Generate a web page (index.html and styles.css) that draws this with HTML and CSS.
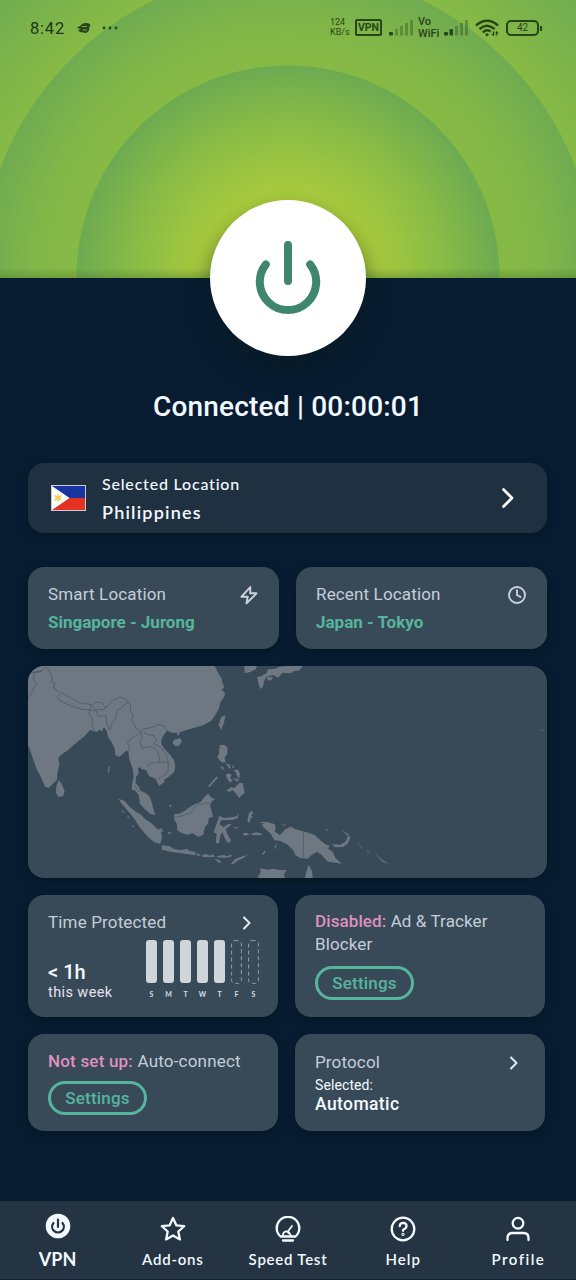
FILE: index.html
```html
<!DOCTYPE html>
<html lang="en">
<head>
<meta charset="utf-8">
<title>VPN</title>
<link rel="stylesheet" href="styles.css">
</head>
<body>
<div class="app">
  <header class="hero">
    <div class="status">
      <span class="clock">8:42</span>
      <svg class="bird" width="14" height="12" viewBox="0 0 14 12"><path d="M1 5 Q4 4 5 2 Q9 0 13 2 Q14 4 12 6 Q13 9 9 11 L3 10 L1 8 L4 7 L0 6Z" fill="currentColor"/><path d="M5 4.500h5M6 8h4" stroke="#78ad4a" stroke-width="1"/></svg>
      <svg class="dots" width="16" height="4" viewBox="0 0 16 4" fill="currentColor"><circle cx="2" cy="2" r="1.400"/><circle cx="8" cy="2" r="1.400"/><circle cx="14" cy="2" r="1.400"/></svg>
      <span class="rate">124<br>KB/s</span>
      <span class="vpn-tag">VPN</span>
      <svg class="signal" width="25" height="16" viewBox="0 0 25 16" fill="currentColor"><rect y="12" width="4" height="3.500" rx="1"/><g opacity=".35"><rect x="6" y="9" width="3" height="6.500"/><rect x="11" y="6" width="3" height="9.500"/><rect x="16" y="3" width="3" height="12.500"/><rect x="21" y="0" width="3" height="15.500"/></g></svg>
      <span class="vowifi">Vo<br>WiFi</span>
      <svg class="signal two" width="25" height="16" viewBox="0 0 25 16" fill="currentColor"><rect y="12" width="4" height="3.500" rx="1"/><rect x="5.500" y="9" width="3.500" height="6.500" rx="1"/><g opacity=".35"><rect x="11" y="6" width="3" height="9.500"/><rect x="16" y="3" width="3" height="12.500"/><rect x="21" y="0" width="3" height="15.500"/></g></svg>
      <svg class="wifi" width="24" height="18" viewBox="0 0 24 18" fill="none" stroke="currentColor" stroke-width="2.400"><path d="M1 6.500Q12-3 23 6.500M4.500 10Q12 3.500 19.500 10M7.800 13.300Q12 9.500 15.500 12.500"/><path d="M10 15.500l2 2 2-2-2-1.500z" fill="currentColor" stroke="none"/><path d="M18.500 12.500v4M21.500 12.500v4" stroke-width="1.500"/><path d="M16.500 14.800l2 2M21.500 12.500l2 2" stroke-width="1"/></svg>
      <span class="battery"><span>42</span></span>
    </div>
  </header>
  <button class="power" aria-label="Disconnect">
    <svg width="70" height="78" viewBox="0 0 70 78" fill="none" stroke="#3e876c" stroke-width="8" stroke-linecap="round"><path d="M35 6v36M12.800 25.500a28.200 28.200 0 1 0 44.400 0"/></svg>
  </button>
  <h1 class="state"><span>Connected | 00:00:01</span></h1>

  <main class="content">
    <section class="card location">
      <svg class="flag" width="35" height="26" viewBox="0 0 35 26"><rect width="35" height="26" fill="#c9cad5"/><path d="M1 1h33v12H1z" fill="#1834a1"/><path d="M1 13h33v12H1z" fill="#e43222"/><path d="M1 1l17.500 12L1 25z" fill="#fff"/><path d="M7 8l1 3 3-1-1.500 3 1.500 3-3-1-1 3-1-3-3 1 1.500-3L3 10l3 1z" fill="#f2cf64"/></svg>
      <div class="location-text">
        <span class="t-sel">Selected Location</span>
        <strong class="t-country">Philippines</strong>
      </div>
      <svg class="chev-lg" width="14" height="22" viewBox="0 0 14 22" fill="none" stroke="#fff" stroke-width="2.700" stroke-linecap="round" stroke-linejoin="round"><path d="M2.500 2.500L11 11l-8.500 8.500"/></svg>
    </section>

    <div class="row quick">
      <section class="card">
        <div class="label">Smart Location</div>
        <div class="link">Singapore - Jurong</div>
        <svg class="corner" width="20" height="20" viewBox="0 0 24 24" fill="none" stroke="#cbd2da" stroke-width="2.400" stroke-linejoin="round"><path d="M13.500 2.500L3 14h7.500l-1.500 8L21 10h-7.500z"/></svg>
      </section>
      <section class="card">
        <div class="label">Recent Location</div>
        <div class="link">Japan - Tokyo</div>
        <svg class="corner" width="20" height="20" viewBox="0 0 20 20" fill="none" stroke="#cbd2da" stroke-width="1.900" stroke-linecap="round"><circle cx="10" cy="10" r="8"/><path d="M10 5.300V10l3.500 2"/></svg>
      </section>
    </div>

    <section class="card map">
      <svg width="519" height="212" viewBox="25 18 1557 636" fill="#6d7883">
        <path d="M25 18H585L596 40 606 55 608 70 614 80 606 91 616 97 614 110 603 125 598 145 587 165 575 182 550 196 520 205 494 212 480 217 478 226 472 226 472 218 458 218 442 212 430 228 426 238 424 250 433 265 450 283 463 300 467 320 463 337 447 350 435 358 432 368 418 377 412 365 407 356 388 348 379 330 366 328 362 321 355 326 357 340 349 352 348 370 359 382 362 392 378 399 391 412 397 430 401 447 407 464 393 462 375 447 361 431 357 404 347 392 337 389 337 372 342 350 339 325 330 301 326 278 321 271 309 282 299 291 287 286 286 268 276 247 265 230 261 212 252 202 247 214 238 209 232 216 211 210 193 230 170 248 145 270 125 284 116 293 119 314 113 340 112 359 99 372 87 383 77 381 66 356 50 325 37 287 28 262 25 258Z"/>
        <path d="M117 360L126 371 135 394 131 407 117 411 109 399 110 378ZM605 170L617 166 613 188 605 209 597 196ZM463 239L482 235 487 244 478 257 467 258 458 249ZM268 317L271 319 267 341 264 332Z"/>
        <path d="M296 416L315 423 328 439 348 455 362 463 379 479 394 489 410 504 425 518 427 532 422 552 404 546 388 533 375 520 360 502 343 475 325 453 308 434ZM303 447l12 9-2 4zM320 465l11 8-5 1zM337 494l8 8-7-2zM416 508l10-3 4 10-8 2zM445 516h8v5h-7zM451 433l5 4-3 5-4-4z"/>
        <path d="M426 556L449 558 463 567 486 571 500 566 511 573 528 577 528 586 507 583 485 580 456 576 427 569ZM531 580l14 5-12 4zM548 585l12-3 10 5 10-4 6 7-25 2-13-2zM592 588l20-3 10 4 12-5 4 5-20 4-24-1zM585 596l15 5 5 9-12-5zM634 611l12-13 18-8 18-5-10 9-16 7-16 12z"/>
        <path d="M464 462L480 461 495 452 510 442 529 430 543 426 555 410 566 401 576 414 586 416 575 427 571 437 577 457 580 470 568 474 564 491 556 501 550 525 535 530 519 520 503 524 486 519 473 511 471 490 463 478ZM565 379l27-31 2 6-24 27z"/>
        <path d="M599 467L612 474 638 472 651 469 657 460 654 475 636 480 604 481 600 493 612 502 626 491 636 493 618 508 624 524 634 541 627 550 617 539 608 517 602 526 598 551 588 548 591 522 582 517 588 499ZM687 461l8-8 6 5-7 9 6 5-8 3-2 15-7-9 3-12zM669 520l14-2 6 6-15 3zM690 521l20-4 18 4-6 5-22-1zM642 502h13v3h-13z"/>
        <path d="M600 256L614 254 624 263 623 281 615 293 618 307 605 307 599 299 593 291 598 281ZM602 318l10 4-2 10zM618 310l12 4 4 12-6-2zM637 315l8 6-6 4zM618 345l10-5 8 5-5 9 9 7-10 7-8-13zM641 332l12-4 8 12-3 17-7-10-2-10zM640 355l18 3-5 8zM621 391L634 382 644 384 659 369 669 369 675 400 667 405 658 414 650 402 639 390 628 396Z"/>
        <path d="M674 18H712L708 28 690 37 675 39ZM712 52L726 48 741 39 745 28 764 27 780 20 805 18H850L838 32 825 32 812 40 789 38 775 53 760 45 741 50 733 63 730 80 722 87 718 76ZM743 50l18 2-8 10-10-3z"/>
        <path d="M727 492L746 487 766 493 768 506 764 514 780 526 797 508 813 500 827 508 855 515 884 524 901 540 917 553 930 557 925 566 939 575 948 595 967 612 948 608 924 605 907 586 892 575 875 586 864 596 842 594 828 586 820 570 802 553 782 543 764 540 752 520 730 501ZM722 486h22v3h-22zM785 493l12 1v4zM765 558l8-8-8 20zM727 583l8-12 3 3-7 11zM917 507l11 2-7 3zM937 552l24 2 17-9 6-15 8 3-7 17-15 11-24 1zM965 510l20 12 10 14-14-12zM1010 543l20 24-7-5zM1042 569l12 14-12-10zM1063 577l20 19 25 17-22-9z"/>
        <path d="M714 654L723 635 721 625 746 629 759 626 785 631 801 630 792 644 796 654ZM856 654L861 632 867 614 877 633 879 654ZM1567 209h3v4h-3z"/>
        <g fill="none" stroke="#4a5764" stroke-width="2.200" stroke-linejoin="round">
          <path d="M25 114L39 95 44 80 53 69 40 59 44 38 65 34 76 22 86 27 93 40 98 52 94 65 105 69 101 84 118 96 M27 40L48 36 68 32"/>
          <path d="M113 109L125 97 149 111 180 128 215 134 211 150 182 147 150 136 120 121ZM218 136L228 127 248 129 258 141 253 149 226 148Z"/>
          <path d="M211 150L231 153 235 168 259 169 260 187 267 207M211 150L208 164 219 177 216 191 223 211M258 145L279 122 300 111 318 117 325 127 304 145 292 151 287 176 275 193 269 211"/>
          <path d="M325 127L333 136 332 157 341 163 336 180 350 204 363 216 353 225 336 233 324 247 329 268 326 280"/>
          <path d="M363 216L373 207 388 204 405 199 412 194 432 197 443 213M363 216L367 234 361 248 369 265 389 259 407 266 416 279 421 306M372 217L384 223 402 227 412 241 402 250 424 262 438 281 446 307M421 306L446 307 445 334 429 350 416 356M384 322L392 309 421 306M346 378L359 396"/>
          <path d="M464 473L489 467 516 458 532 430 549 434 555 428 571 430M851 515v77"/>
        </g>
      </svg>
    </section>

    <div class="row stats">
      <section class="card">
        <div class="label">Time Protected</div>
        <svg class="chev" width="10" height="14" viewBox="0 0 10 14"><path d="M2 1.500L7.500 7 2 12.500"/></svg>
        <div class="time-row">
          <div class="hours"><strong>&lt; 1h</strong><span>this week</span></div>
          <div class="chart">
            <div class="day"><i></i>S</div><div class="day"><i></i>M</div><div class="day"><i></i>T</div><div class="day"><i></i>W</div><div class="day"><i></i>T</div>
            <div class="day empty"><svg width="11" height="44"><rect x=".6" y=".6" width="9.800" height="42.800" rx="3"/></svg>F</div>
            <div class="day empty"><svg width="11" height="44"><rect x=".6" y=".6" width="9.800" height="42.800" rx="3"/></svg>S</div>
          </div>
        </div>
      </section>
      <section class="card">
        <div class="label blocker"><b>Disabled:</b> Ad &amp; Tracker<br>Blocker</div>
        <button class="pill">Settings</button>
      </section>
      <section class="card">
        <div class="label auto"><b>Not set up:</b> Auto-connect</div>
        <button class="pill low">Settings</button>
      </section>
      <section class="card protocol">
        <div class="label">Protocol</div>
        <svg class="chev" width="10" height="14" viewBox="0 0 10 14"><path d="M2 1.500L7.500 7 2 12.500"/></svg>
        <div class="p-sel">Selected:</div>
        <div class="p-auto">Automatic</div>
      </section>
    </div>
  </main>

  <nav class="tabs">
    <a class="tab active"><svg width="26" height="26" viewBox="0 0 26 26"><circle cx="13" cy="13" r="12.300" fill="#f3f9ff" stroke="none"/><path d="M13 6.500v7.500M8.500 10a5.800 5.800 0 1 0 9 0" stroke="#243443" stroke-width="2.200"/></svg><span>VPN</span></a>
    <a class="tab"><svg width="26" height="26" viewBox="0 0 26 26"><path d="M13 2l3.300 7.300 7.900.9-5.900 5.300 1.600 7.900-6.900-3.900-6.900 3.900 1.600-7.900L1.800 10.200l7.900-.9z"/></svg><span>Add-ons</span></a>
    <a class="tab"><svg width="26" height="26" viewBox="0 0 26 26"><path d="M5.500 20.500a11.300 11.300 0 1 1 15 0zM8 24.500h10"/><path d="M8 20q-.5-3.500 2.500-4.500 2.500-.5 3 1.500M12.500 16l4.500-6M14 16.500l2 3.500" stroke-width="1.800"/></svg><span>Speed Test</span></a>
    <a class="tab"><svg width="26" height="26" viewBox="0 0 26 26"><circle cx="13" cy="13" r="11.300"/><path d="M9.700 10.200q.3-3.400 3.500-3.400 3.300.2 3.300 3.200 0 2.300-3.400 3.800v1"/><circle cx="13" cy="18.300" r=".5"/></svg><span class="n-help">Help</span></a>
    <a class="tab"><svg width="26" height="26" viewBox="0 0 26 26"><circle cx="13" cy="7.200" r="5.300"/><path d="M2.500 24v-2q0-5 5-5h11q5 0 5 5v2"/></svg><span class="n-profile">Profile</span></a>
  </nav>
</div>
</body>
</html>
```
FILE: styles.css
```css
* { box-sizing: border-box; }
body { margin: 0; background: #081c31; font-family: Roboto, "Liberation Sans", sans-serif; color: #f3f9ff; }
button { font: inherit; padding: 0; }
.app { width: 576px; height: 1280px; display: flex; flex-direction: column; overflow: hidden; }

.hero {
  height: 277.500px; flex: none;
  background:
    linear-gradient(to top, rgba(70, 110, 40, .35), transparent 10px),
    radial-gradient(circle at 288px 277px, #b0cf38 0, #aacb3c 78px, #9bc441 115px, #85b947 163px, #6dab51 211px, #87b945 212px, #82b748 250px, #6fab50 307px, #87ba45 308px, #7db44a 350px, #6dab51 410px);
}
.status { height: 56px; display: flex; align-items: center; padding-left: 30px; color: #26451a; }
.clock { font-size: 16.500px; width: 47px; letter-spacing: .8px; color: #203818; }
.dots { margin-left: 11px; }
.rate { margin-left: 212px; width: 25px; font-size: 9px; line-height: 9.500px; padding-bottom: 1px; }
.vpn-tag { border: 2px solid; border-radius: 2px; width: 27px; height: 17px; margin-bottom: 1px; font: bold 10.500px/13px Roboto, sans-serif; text-align: center; }
.signal { margin-left: 7px; }
.vowifi { margin-left: 4px; width: 22px; font-size: 11px; line-height: 12px; font-weight: 500; }
.signal.two { margin-left: 4px; }
.wifi { margin-left: 6px; }
.battery { margin-left: 7px; width: 33px; height: 16px; margin-bottom: 1px; border: 2px solid; border-radius: 5px; font-size: 10px; line-height: 12px; text-align: center; position: relative; }
.battery::after { content: ""; position: absolute; right: -5px; top: 4px; width: 2px; height: 5px; background: currentColor; }

.power { width: 156px; height: 156px; flex: none; margin: -78px auto 0; border: 0; border-radius: 50%; background: #fff; box-shadow: 0 12px 22px rgba(6, 26, 30, .6); display: grid; place-items: center; position: relative; }
.state { margin: 34.500px 0 0; height: 33px; font-size: 28px; line-height: 33px; font-weight: 500; letter-spacing: .2px; text-align: center; }

.content { padding: 40px 29px 0 28px; flex: 1; }
.card { background: #384a58; border-radius: 16px; box-shadow: 0 3px 7px rgba(5, 22, 28, .6); position: relative; }
.location { height: 70px; background: #1f3040; display: flex; align-items: center; padding: 0 32px 0 23px; }
.location-text { margin-left: 16px; flex: 1; display: flex; flex-direction: column; font-family: Lato, sans-serif; }
.t-sel { font-size: 16px; line-height: 28px; letter-spacing: .8px; font-weight: 500; }
.t-country { font-size: 18px; line-height: 28px; letter-spacing: 1.200px; font-weight: 600; }

.row { display: grid; grid-template-columns: 1fr 1fr; }
.quick { gap: 17px; margin-top: 34px; }
.quick .card { height: 82px; padding: 12.500px 20px; }
.label { color: #c5ced8; font-size: 17px; line-height: 28px; letter-spacing: .15px; white-space: nowrap; }
.link { color: #57b49d; font-size: 17px; line-height: 28px; font-weight: 700; white-space: nowrap; }
.corner { position: absolute; right: 20.500px; top: 18px; }

.map { height: 212px; margin-top: 17px; overflow: hidden; }
.map svg { display: block; }

.stats { width: 517px; gap: 17px; margin-top: 17px; grid-template-rows: 122px 97px; }
.stats .card { padding: 13px 20px; }
.chev { position: absolute; right: 26px; top: 21px; fill: none; stroke: #e2e9ef; stroke-width: 2; stroke-linecap: round; stroke-linejoin: round; }
.time-row { display: flex; justify-content: space-between; margin-top: 4px; }
.hours { display: flex; flex-direction: column; padding-top: 21px; }
.hours strong { font-size: 20px; line-height: 22px; font-weight: 500; }
.hours span { font-size: 14.500px; line-height: 19px; color: #e5e1ef; letter-spacing: .4px; }
.chart { display: flex; gap: 6px; margin-right: -1px; }
.day { width: 11px; display: flex; flex-direction: column; align-items: center; font: bold 7px/8px Lato, sans-serif; color: #d5dfe6; }
.day i { width: 10.500px; height: 43px; border-radius: 3px; background: #cfd6d9; margin-bottom: 7px; }
.day svg { fill: none; stroke: #8e9ca6; stroke-width: 1; stroke-dasharray: 4 3; margin-bottom: 6px; }
.label b { color: #df91bd; font-weight: 500; }
.label.blocker { line-height: 23px; padding-top: 2px; letter-spacing: .1px; }
.label.auto { letter-spacing: .2px; }
.pill { display: block; width: 99px; height: 34px; margin-top: 10px; border: 3px solid #57b49d; border-radius: 17px; background: none; color: #57b49d; font-size: 17px; font-weight: 500; letter-spacing: .2px; }
.pill.low { margin-top: 6px; }
.protocol .chev { right: 26px; top: 22px; }
.protocol .label { line-height: 30px; }
.p-sel { font-size: 14px; line-height: 16px; letter-spacing: .1px; }
.p-auto { font-size: 17.500px; line-height: 22px; font-weight: 500; letter-spacing: .4px; }

.tabs { height: 79px; flex: none; background: #243443; display: grid; grid-template-columns: repeat(5, 1fr); border-bottom: 1px solid #17223a; font-family: Lato, sans-serif; }
.tab { display: flex; flex-direction: column; align-items: center; padding-top: 15px; font-size: 15px; line-height: 20px; font-weight: 600; letter-spacing: .75px; white-space: nowrap; }
.tab svg { fill: none; stroke: #f3f9ff; stroke-width: 2.300; stroke-linecap: round; stroke-linejoin: round; margin-bottom: 7px; }
.n-help { letter-spacing: 1px; }
.n-profile { letter-spacing: 1.500px; }
.active { padding-top: 12px; font-size: 18px; font-weight: 700; letter-spacing: 0; }
.active svg { margin-bottom: 10px; }
```
